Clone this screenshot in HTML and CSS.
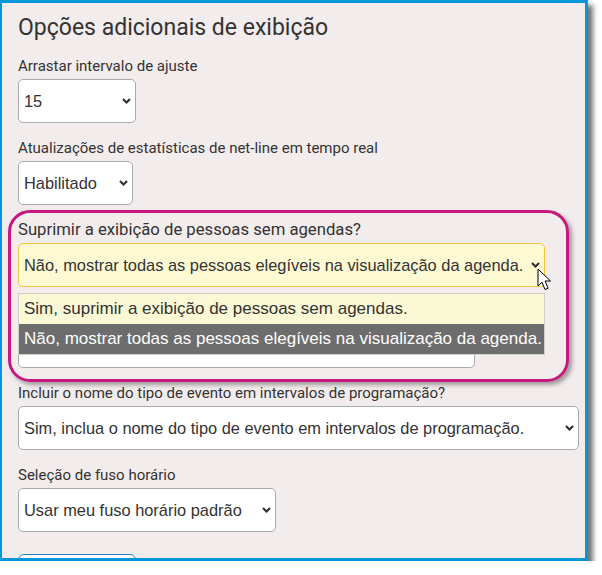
FILE: index.html
```html
<!DOCTYPE html>
<html lang="pt-BR">
<head>
<meta charset="utf-8">
<title>Opções adicionais de exibição</title>
<link rel="stylesheet" href="styles.css">
</head>
<body>
<div class="frame">
  <h1 class="title">Opções adicionais de exibição</h1>

  <div class="field">
    <div class="label">Arrastar intervalo de ajuste</div>
    <div class="select w-snap">
      <span class="value">15</span>
      <svg class="chevron" width="9" height="6" viewBox="0 0 9 6"><path d="M1 1 L4.5 4.5 L8 1" /></svg>
    </div>
  </div>

  <div class="field">
    <div class="label">Atualizações de estatísticas de net-line em tempo real</div>
    <div class="select w-stats">
      <span class="value">Habilitado</span>
      <svg class="chevron" width="9" height="6" viewBox="0 0 9 6"><path d="M1 1 L4.5 4.5 L8 1" /></svg>
    </div>
  </div>

  <div class="field field-open">
    <div class="ring"></div>
    <div class="label label-lg">Suprimir a exibição de pessoas sem agendas?</div>
    <div class="select select-focus w-suppress">
      <span class="value">Não, mostrar todas as pessoas elegíveis na visualização da agenda.</span>
      <svg class="chevron" width="9" height="6" viewBox="0 0 9 6"><path d="M1 1 L4.5 4.5 L8 1" /></svg>
      <svg class="cursor" width="17" height="24" viewBox="0 0 17 24">
        <path d="M1 1 L1 18 L5 14.2 L8 21.5 L11 20.2 L8.1 13 L13.5 13 Z" />
      </svg>
    </div>
    <div class="list-wrap">
      <div class="under"></div>
      <ul class="options">
        <li class="option">Sim, suprimir a exibição de pessoas sem agendas.</li>
        <li class="option option-active">Não, mostrar todas as pessoas elegíveis na visualização da agenda.</li>
      </ul>
    </div>
  </div>

  <div class="field">
    <div class="label">Incluir o nome do tipo de evento em intervalos de programação?</div>
    <div class="select w-event">
      <span class="value">Sim, inclua o nome do tipo de evento em intervalos de programação.</span>
      <svg class="chevron" width="9" height="6" viewBox="0 0 9 6"><path d="M1 1 L4.5 4.5 L8 1" /></svg>
    </div>
  </div>

  <div class="field">
    <div class="label">Seleção de fuso horário</div>
    <div class="select w-tz">
      <span class="value">Usar meu fuso horário padrão</span>
      <svg class="chevron" width="9" height="6" viewBox="0 0 9 6"><path d="M1 1 L4.5 4.5 L8 1" /></svg>
    </div>
  </div>

  <button class="btn" type="button"></button>
</div>
</body>
</html>
```

FILE: styles.css
```css
html, body {
  margin: 0;
  padding: 0;
  background: #ffffff;
}

.frame {
  box-sizing: border-box;
  width: 588px;
  height: 561px;
  overflow: hidden;
  background: #f3ecec;
  border-style: solid;
  border-color: #0797d9;
  border-width: 3px 3px 3px 2px;
  box-shadow: 5px 5px 5px rgba(0, 0, 0, 0.55);
  padding: 12px 0 0 16px;
  font-family: Roboto, "Liberation Sans", sans-serif;
  color: #333333;
}

.title {
  margin: 0 0 16px;
  font-size: 23px;
  line-height: 26px;
  font-weight: 400;
  color: #333333;
}

.field {
  margin-bottom: 16px;
}

.field-open {
  position: relative;
}

.label {
  font-size: 15px;
  line-height: 18px;
  margin-bottom: 4px;
  color: #333333;
  white-space: nowrap;
}

.label-lg {
  font-size: 16.7px;
}

.select {
  box-sizing: border-box;
  height: 44px;
  display: flex;
  align-items: center;
  background: #ffffff;
  border: 1px solid #aaaaaa;
  border-radius: 5px;
  padding: 0 4px 0 5px;
  font-family: "Liberation Sans", Arial, sans-serif;
  font-size: 16.4px;
  color: #333333;
  white-space: nowrap;
}

.select .value {
  flex: 1;
}

.chevron {
  flex: none;
  fill: none;
  stroke: #333333;
  stroke-width: 2.2;
}

.w-snap { width: 118px; }
.w-stats { width: 115px; }
.w-suppress { width: 527px; }
.w-event { width: 561px; }
.w-tz { width: 258px; }

.select-focus {
  position: relative;
  background: #fdfad3;
  border-color: #f2c53d;
}

.cursor {
  position: absolute;
  left: 518px;
  top: 24px;
  fill: #ffffff;
  stroke: #000000;
  stroke-width: 1;
  stroke-linejoin: round;
}

.list-wrap {
  position: relative;
  margin-top: 6px;
}

.under {
  box-sizing: border-box;
  width: 457px;
  height: 75px;
  background: #ffffff;
  border: 1px solid #aaaaaa;
  border-radius: 5px;
}

.options {
  position: absolute;
  left: 0;
  top: 0;
  width: 527px;
  box-sizing: border-box;
  margin: 0;
  padding: 0;
  list-style: none;
  border: 1px solid #cfcfc4;
  background: #fbf8d6;
  font-family: "Liberation Sans", Arial, sans-serif;
  font-size: 17px;
}

.option {
  height: 30px;
  line-height: 30px;
  padding-left: 5px;
  color: #333333;
  white-space: nowrap;
}

.option-active {
  background: #6d6d6d;
  color: #ffffff;
}

.ring {
  position: absolute;
  left: -10px;
  top: -11px;
  width: 561px;
  height: 172px;
  box-sizing: border-box;
  border: 3px solid #c8177f;
  border-radius: 22px;
  box-shadow: 3px 3px 4px rgba(0, 0, 0, 0.35);
  pointer-events: none;
}

.btn {
  display: block;
  width: 118px;
  height: 40px;
  margin-top: 22px;
  background: #ffffff;
  border: 1px solid #2b7fd1;
  border-radius: 6px;
  padding: 0;
}
```
